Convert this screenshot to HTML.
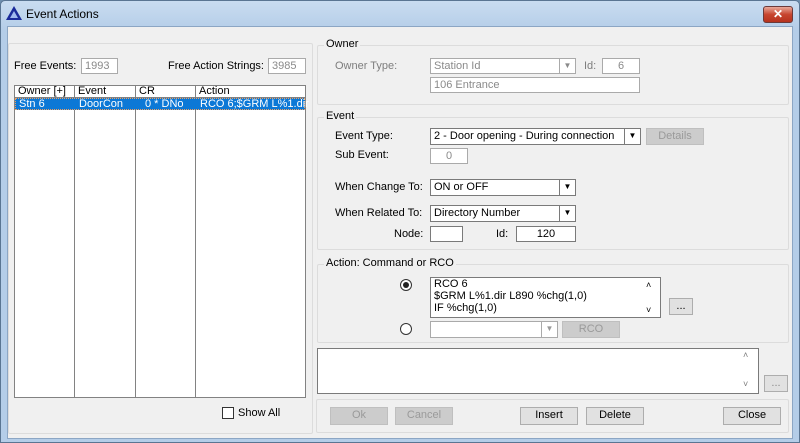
<!DOCTYPE html>
<html><head><style>
*{box-sizing:border-box;margin:0;padding:0}
body{width:800px;height:443px;background:#6f8fae;font-family:"Liberation Sans",sans-serif;font-size:11px;color:#000;position:relative;overflow:hidden}
.win{position:absolute;left:0;top:0;width:800px;height:443px;background:linear-gradient(#c9dcf0,#b4cde8 30px,#b4cde8);border:1px solid #5a7592;border-radius:5px 5px 0 0}
.client{position:absolute;left:7px;top:26px;width:786px;height:413px;background:#f0f0f0;border:1px solid #8ca6c4}
.a{position:absolute;white-space:nowrap}
.grp{position:absolute;border:1px solid #dcdcdc;border-radius:2px}
.gl{position:absolute;background:#f0f0f0;padding:0 2px;top:-8px;left:6px}
.in{position:absolute;background:#fff;border:1px solid #7a7a7a;padding:1px 3px;line-height:13px}
.dis{color:#8a8a8a;border-color:#aaa}
.btn{position:absolute;background:#e1e1e1;border:1px solid #adadad;text-align:center;line-height:15px}
.bd{color:#9a9a9a;background:#ccc;border-color:#bfbfbf}
.dd{position:absolute;right:0;top:0;width:16px;height:100%;border-left:1px solid #7a7a7a;font-size:8px;text-align:center;line-height:14px}
.g{color:#7d7d7d}
</style></head><body>
<div class="win">
 <div class="a" style="left:5px;top:5px;width:0;height:0;border-left:8px solid transparent;border-right:8px solid transparent;border-bottom:14px solid #1a2a9a"></div>
 <div class="a" style="left:9px;top:10px;width:0;height:0;border-left:4px solid transparent;border-right:4px solid transparent;border-bottom:7px solid #9fb8ee"></div>
 <div class="a" style="left:25px;top:6px;font-size:12px">Event Actions</div>
 <div class="a" style="left:762px;top:5px;width:30px;height:17px;border:1px solid #6b3a3a;border-radius:3px;background:linear-gradient(#e9a99a,#c7452f 50%,#b6321e);color:#fff;font-weight:bold;text-align:center;line-height:15px;font-size:12px">✕</div>
</div>
<div class="client"></div>

<div class="grp" style="left:8px;top:43px;width:305px;height:391px"></div>
<div class="a" style="left:14px;top:60px">Free Events:</div>
<div class="in dis" style="left:81px;top:58px;width:37px;height:16px">1993</div>
<div class="a" style="left:168px;top:60px">Free Action Strings:</div>
<div class="in dis" style="left:268px;top:58px;width:38px;height:16px">3985</div>

<div class="a" style="left:14px;top:85px;width:292px;height:313px;background:#fff;border:1px solid #828282"></div>
<div class="a" style="left:14px;top:85px;width:292px;height:13px;border-bottom:1px solid #828282"></div>
<div class="a" style="left:74px;top:85px;height:313px;border-left:1px solid #828282"></div>
<div class="a" style="left:135px;top:85px;height:313px;border-left:1px solid #828282"></div>
<div class="a" style="left:195px;top:85px;height:313px;border-left:1px solid #828282"></div>
<div class="a" style="left:18px;top:85px;line-height:13px">Owner [+]</div>
<div class="a" style="left:78px;top:85px;line-height:13px">Event</div>
<div class="a" style="left:139px;top:85px;line-height:13px">CR</div>
<div class="a" style="left:199px;top:85px;line-height:13px">Action</div>
<div class="a" style="left:15px;top:98px;width:290px;height:12px;background:#0c78d6;border:1px dotted #f0a060;color:#fff;line-height:10px">
 <span class="a" style="left:3px">Stn 6</span><span class="a" style="left:63px">DoorCon</span><span class="a" style="left:129px">0 * DNo</span><span class="a" style="left:184px">RCO 6;$GRM L%1.dir</span>
</div>
<div class="a" style="left:222px;top:407px;width:12px;height:12px;border:1px solid #333;background:#fff"></div>
<div class="a" style="left:238px;top:407px">Show All</div>

<div class="grp" style="left:317px;top:45px;width:472px;height:60px"><span class="gl">Owner</span></div>
<div class="a g" style="left:335px;top:60px">Owner Type:</div>
<div class="in dis" style="left:430px;top:58px;width:146px;height:16px">Station Id<div class="dd" style="border-color:#aaa">▼</div></div>
<div class="a g" style="left:584px;top:60px">Id:</div>
<div class="in dis" style="left:602px;top:58px;width:38px;height:16px;text-align:center">6</div>
<div class="in dis" style="left:430px;top:77px;width:210px;height:16px">106 Entrance</div>

<div class="grp" style="left:317px;top:117px;width:472px;height:133px"><span class="gl">Event</span></div>
<div class="a" style="left:335px;top:130px">Event Type:</div>
<div class="in" style="left:430px;top:128px;width:211px;height:17px">2 - Door opening - During connection<div class="dd">▼</div></div>
<div class="btn bd" style="left:646px;top:128px;width:58px;height:17px">Details</div>
<div class="a" style="left:335px;top:149px">Sub Event:</div>
<div class="in dis" style="left:430px;top:148px;width:38px;height:16px;text-align:center">0</div>
<div class="a" style="left:335px;top:181px">When Change To:</div>
<div class="in" style="left:430px;top:179px;width:146px;height:17px">ON or OFF<div class="dd">▼</div></div>
<div class="a" style="left:335px;top:207px">When Related To:</div>
<div class="in" style="left:430px;top:205px;width:146px;height:17px">Directory Number<div class="dd">▼</div></div>
<div class="a" style="left:394px;top:228px">Node:</div>
<div class="in" style="left:430px;top:226px;width:33px;height:16px"></div>
<div class="a" style="left:496px;top:228px">Id:</div>
<div class="in" style="left:516px;top:226px;width:60px;height:16px;text-align:center">120</div>

<div class="grp" style="left:317px;top:264px;width:472px;height:79px"><span class="gl">Action: Command or RCO</span></div>
<div class="a" style="left:400px;top:279px;width:12px;height:12px;border:1px solid #333;border-radius:50%;background:#fff"><div class="a" style="left:2px;top:2px;width:6px;height:6px;border-radius:50%;background:#222"></div></div>
<div class="in" style="left:430px;top:277px;width:231px;height:41px;line-height:12px;padding-top:0">RCO 6<br>$GRM L%1.dir L890 %chg(1,0)<br>IF %chg(1,0)<span class="a" style="left:215px;top:1px;font-size:9px">˄</span><span class="a" style="left:215px;top:26px;font-size:9px">˅</span></div>
<div class="btn" style="left:669px;top:298px;width:24px;height:17px">...</div>
<div class="a" style="left:400px;top:323px;width:12px;height:12px;border:1px solid #333;border-radius:50%;background:#fff"></div>
<div class="in dis" style="left:430px;top:321px;width:128px;height:17px"><div class="dd" style="border-color:#aaa;color:#999">▼</div></div>
<div class="btn bd" style="left:562px;top:321px;width:58px;height:17px">RCO</div>

<div class="in" style="left:317px;top:348px;width:442px;height:46px"><span class="a g" style="left:425px;top:0;font-size:9px">˄</span><span class="a g" style="left:425px;top:29px;font-size:9px">˅</span></div>
<div class="btn" style="left:764px;top:375px;width:24px;height:17px;color:#888">...</div>

<div class="grp" style="left:316px;top:399px;width:473px;height:34px"></div>
<div class="btn bd" style="left:330px;top:407px;width:58px;height:18px">Ok</div>
<div class="btn bd" style="left:395px;top:407px;width:58px;height:18px">Cancel</div>
<div class="btn" style="left:520px;top:407px;width:58px;height:18px">Insert</div>
<div class="btn" style="left:586px;top:407px;width:58px;height:18px">Delete</div>
<div class="btn" style="left:723px;top:407px;width:58px;height:18px">Close</div>
</body></html>
